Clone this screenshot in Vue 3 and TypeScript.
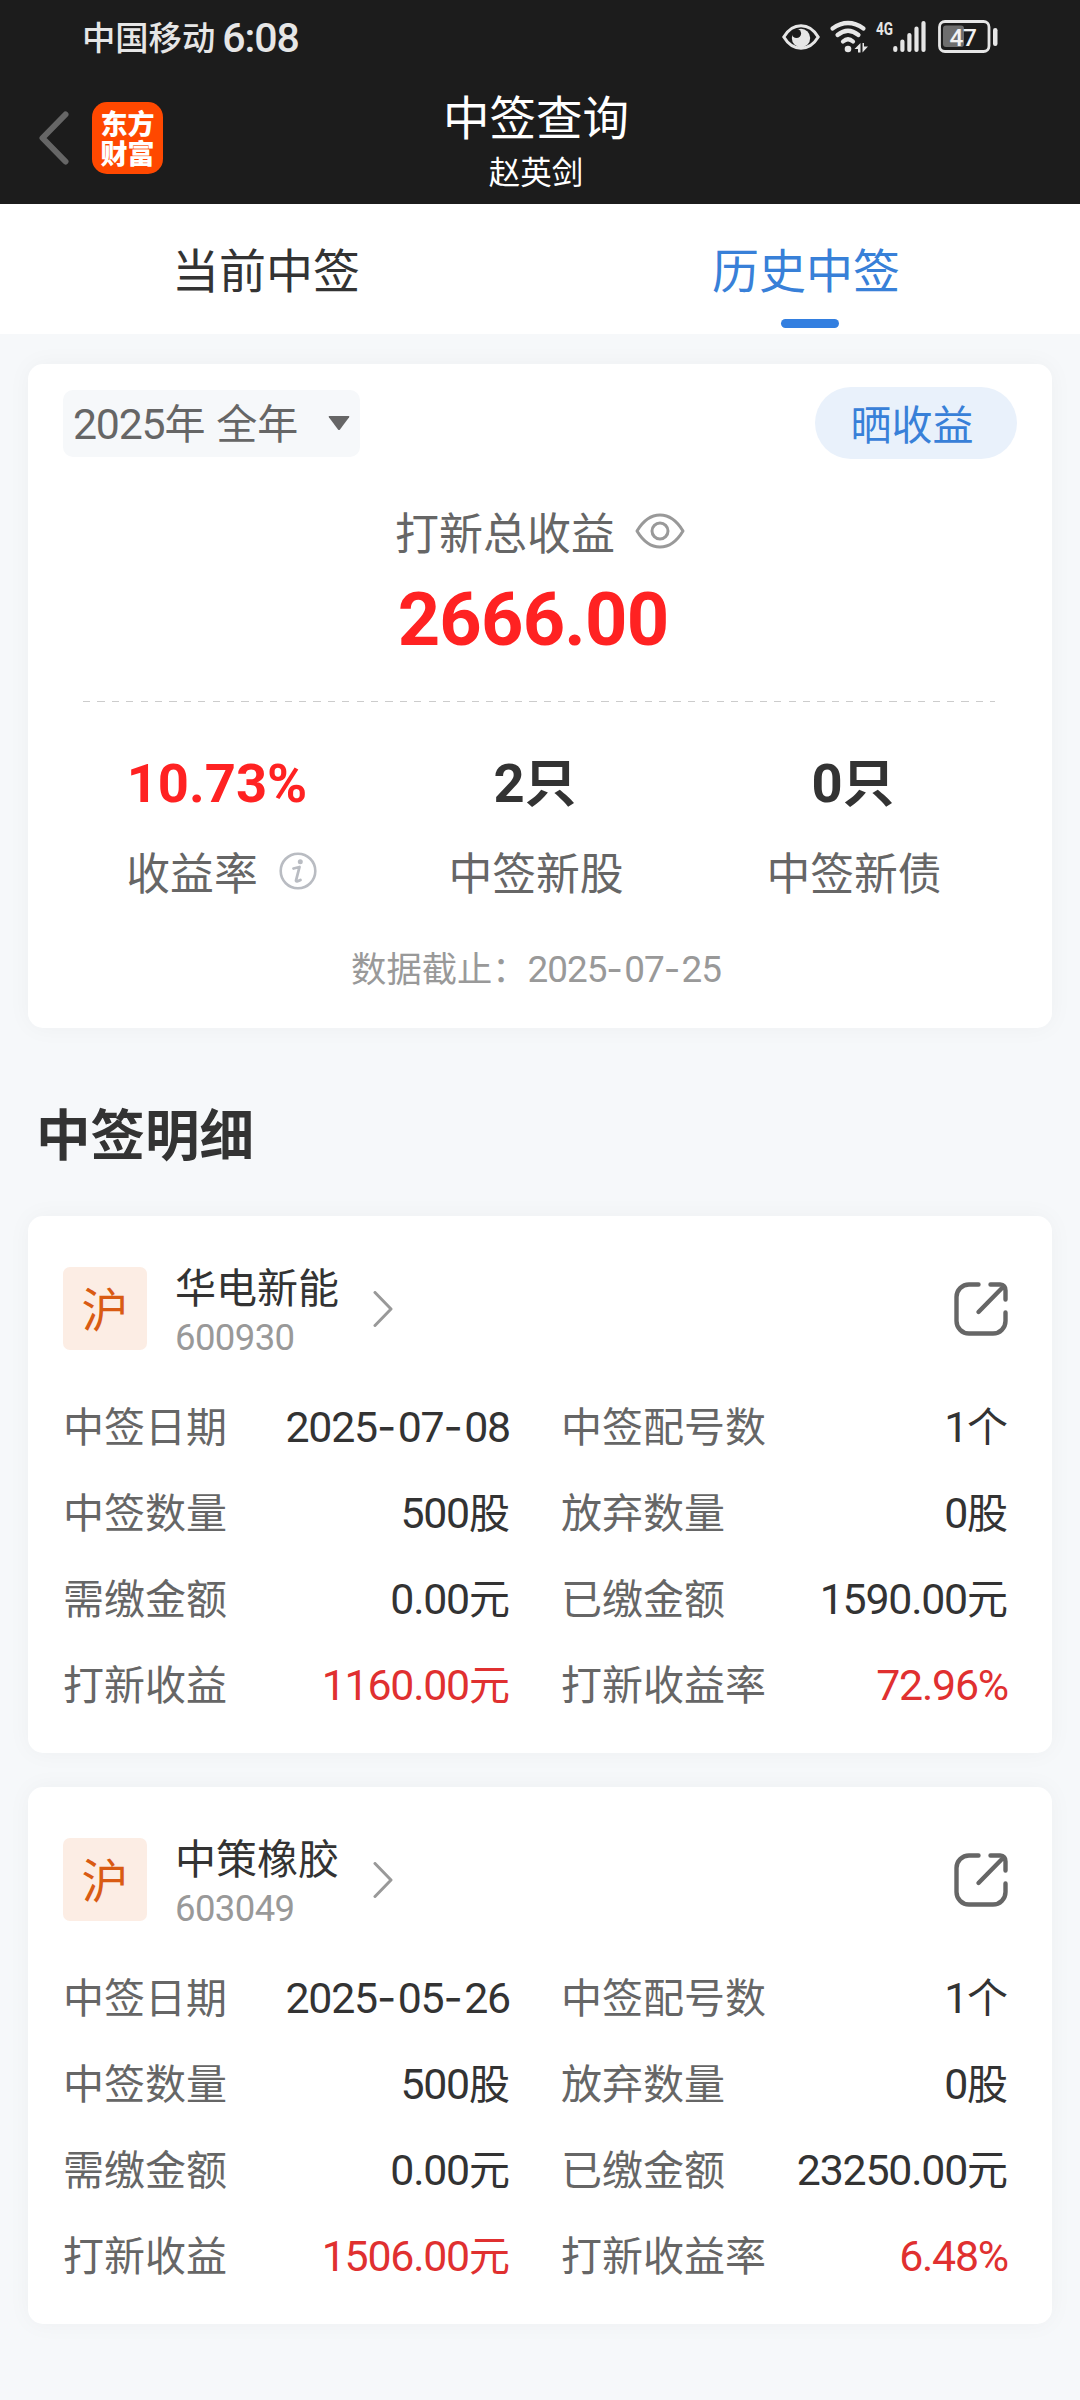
<script setup lang="ts">
import { h } from 'vue'
import type { FunctionalComponent } from 'vue'

interface Field {
  label: string
  value: string
  unit?: string
  up?: boolean
}

interface Lot {
  market: string
  name: string
  code: string
  fields: Field[]
}

const lots: Lot[] = [
  {
    market: '沪',
    name: '华电新能',
    code: '600930',
    fields: [
      { label: '中签日期', value: '2025-07-08' },
      { label: '中签配号数', value: '1', unit: '个' },
      { label: '中签数量', value: '500', unit: '股' },
      { label: '放弃数量', value: '0', unit: '股' },
      { label: '需缴金额', value: '0.00', unit: '元' },
      { label: '已缴金额', value: '1590.00', unit: '元' },
      { label: '打新收益', value: '1160.00', unit: '元', up: true },
      { label: '打新收益率', value: '72.96%', up: true },
    ],
  },
  {
    market: '沪',
    name: '中策橡胶',
    code: '603049',
    fields: [
      { label: '中签日期', value: '2025-05-26' },
      { label: '中签配号数', value: '1', unit: '个' },
      { label: '中签数量', value: '500', unit: '股' },
      { label: '放弃数量', value: '0', unit: '股' },
      { label: '需缴金额', value: '0.00', unit: '元' },
      { label: '已缴金额', value: '23250.00', unit: '元' },
      { label: '打新收益', value: '1506.00', unit: '元', up: true },
      { label: '打新收益率', value: '6.48%', up: true },
    ],
  },
]

// Latin digits are set slightly larger than the surrounding Chinese text,
// with a wider dash between the parts of a date.
const Num: FunctionalComponent<{ text: string }> = (props) =>
  h(
    'span',
    { class: 'num' },
    props.text
      .split(/(-)/)
      .map((part) => (part === '-' ? h('span', { class: 'dash' }, '-') : part)),
  )
Num.props = ['text']
</script>

<template>
  <div class="page">
    <header class="top">
      <div class="status">
        <span class="carrier">中国移动</span>
        <span class="clock">6:08</span>
        <div class="status-icons">
          <svg width="38" height="32" viewBox="0 0 38 32">
            <path d="M1.8 16C6 9 12 4.800 19 4.800S32 9 36.200 16C32 23 26 27.200 19 27.200S6 23 1.800 16Z" fill="none" stroke="#e6e6e6" stroke-width="3" />
            <circle cx="19" cy="17" r="9.200" fill="#e6e6e6" />
            <circle cx="14.500" cy="12.500" r="4.600" fill="#1c1c1c" />
          </svg>
          <svg class="wifi" width="38" height="34" viewBox="0 0 38 34">
            <g fill="none" stroke="#e6e6e6" stroke-width="4.200" stroke-linecap="round">
              <path d="M2.500 8.500Q18 -2.500 33.500 8.500" />
              <path d="M7.500 15Q18 6.500 28.500 15" />
              <path d="M13 21.500Q18 17 23 21.500" />
            </g>
            <circle cx="18" cy="29" r="3.300" fill="#e6e6e6" />
            <path d="M30.500 23v9.500H28V29h-3.500zM32.500 32.500V23H34v3.500h4z" fill="#e6e6e6" />
          </svg>
          <svg class="signal" width="50" height="34" viewBox="0 0 50 34">
            <text x="0" y="15" font-family="Roboto" font-weight="700" font-size="19" textLength="17" lengthAdjust="spacingAndGlyphs" fill="#e6e6e6">4G</text>
            <g stroke="#e6e6e6" stroke-width="4.200" stroke-linecap="round">
              <path d="M19.300 28v2M26.400 21.500v8.500M33.400 15v15M40.500 8.500v21.500M47.500 3v27" />
            </g>
          </svg>
          <svg class="battery" width="60" height="33" viewBox="0 0 60 33">
            <rect x="1.500" y="1.500" width="49.500" height="30" rx="5.500" fill="none" stroke="#e6e6e6" stroke-width="2.800" />
            <rect x="5" y="5.500" width="21" height="21.500" rx="3" fill="#6e6e6e" />
            <rect x="55" y="8" width="4.500" height="18" rx="2.200" fill="#e6e6e6" />
            <text x="25" y="25.500" text-anchor="middle" font-family="Roboto" font-weight="500" font-size="24.500" letter-spacing="-0.500" fill="#f2f2f2">47</text>
          </svg>
        </div>
      </div>
      <div class="nav">
        <div class="nav-left">
          <svg width="30" height="54" viewBox="0 0 30 54">
            <path d="M26.500 3.500 3.500 27 26.500 50.500" fill="none" stroke="#666" stroke-width="6" stroke-linecap="round" stroke-linejoin="round" />
          </svg>
          <div class="logo"><span>东方</span><span>财富</span></div>
        </div>
        <div class="nav-title">
          <h1>中签查询</h1>
          <p>赵英剑</p>
        </div>
        <div class="nav-right"></div>
      </div>
    </header>

    <nav class="tabs">
      <div class="tab"><span>当前中签</span></div>
      <div class="tab active"><span>历史中签</span><i></i></div>
    </nav>

    <main>
      <section class="card summary">
        <div class="filter">
          <div class="period">
            <span><Num text="2025" />年 全年</span>
            <svg width="24" height="16" viewBox="0 0 24 16"><path d="M2.500 1h19q1.500 0 .6 1.300L13 14.500q-1 1.200-2 0L1.900 2.300Q1 1 2.500 1Z" fill="#666" /></svg>
          </div>
          <button class="show-off" type="button">晒收益</button>
        </div>
        <div class="total-label">
          <span>打新总收益</span>
          <svg width="50" height="36" viewBox="0 0 50 36" fill="none" stroke="#999" stroke-width="3">
            <path d="M2 18C8 8 16 2 25 2S42 8 48 18C42 28 34 34 25 34S8 28 2 18Z" stroke-linejoin="round" />
            <circle cx="25" cy="18" r="8" />
          </svg>
        </div>
        <div class="total">2666.00</div>
        <div class="divider"></div>
        <div class="stats">
          <div class="stat">
            <div class="stat-value red"><Num text="10.73%" /></div>
            <div class="stat-label with-info">
              <span>收益率</span>
              <svg width="38" height="38" viewBox="0 0 38 38">
                <circle cx="19" cy="19" r="17.300" fill="none" stroke="#b9bcc2" stroke-width="2.600" />
                <circle cx="21.300" cy="9.800" r="2.500" fill="#b9bcc2" />
                <path d="M14.500 16.500 20.500 15 17 28.500Q16.800 30.300 21.500 28" fill="none" stroke="#b9bcc2" stroke-width="2.800" stroke-linecap="round" stroke-linejoin="round" />
              </svg>
            </div>
          </div>
          <div class="stat">
            <div class="stat-value"><Num text="2" />只</div>
            <div class="stat-label"><span>中签新股</span></div>
          </div>
          <div class="stat">
            <div class="stat-value"><Num text="0" />只</div>
            <div class="stat-label"><span>中签新债</span></div>
          </div>
        </div>
        <div class="as-of">数据截止：<Num text="2025-07-25" /></div>
      </section>

      <h2>中签明细</h2>

      <section v-for="lot in lots" :key="lot.code" class="card lot">
        <div class="lot-head">
          <div class="market">{{ lot.market }}</div>
          <div class="lot-name">
            <div class="name">{{ lot.name }}</div>
            <div class="code">{{ lot.code }}</div>
          </div>
          <svg class="chevron" width="20" height="36" viewBox="0 0 20 36">
            <path d="M2 1.500 18 18 2 34.500" fill="none" stroke="#999" stroke-width="3" stroke-linejoin="round" stroke-linecap="round" />
          </svg>
          <svg class="share" width="54" height="54" viewBox="0 0 54 54" fill="none" stroke="#666" stroke-width="4.400" stroke-linecap="round" stroke-linejoin="round">
            <path d="M24.500 2.500H15A12.500 12.500 0 0 0 2.500 15V39A12.500 12.500 0 0 0 15 51.500H39A12.500 12.500 0 0 0 51.500 39V30.500" />
            <path d="M36.500 2.500H46Q51.500 3 51.500 8.500V17.500M50 4 24.500 30" />
          </svg>
        </div>
        <div class="fields">
          <div v-for="field in lot.fields" :key="field.label" class="field">
            <span class="label">{{ field.label }}</span>
            <span class="value" :class="{ up: field.up }"><Num :text="field.value" />{{ field.unit }}</span>
          </div>
        </div>
      </section>
    </main>
  </div>
</template>

<style>
body {
  margin: 0;
  background: #f6f8fa;
}
.num {
  font-family: Roboto, sans-serif;
  font-size: 1.045em;
  letter-spacing: -0.028em;
}
.num .dash {
  font-family: Inter, sans-serif;
  font-size: 0.98em;
  letter-spacing: 0.035em;
}
</style>

<style scoped>
.page {
  width: 1080px;
  height: 2400px;
  overflow: hidden;
  background: #f6f8fa;
  font-family: 'Noto Sans CJK SC', sans-serif;
  color: #333;
  white-space: nowrap;
}
.top {
  box-sizing: border-box;
  height: 204px;
  background: #1c1c1c;
}
.status {
  display: flex;
  align-items: center;
  height: 74px;
  padding: 0 82px 0 82px;
  color: #e6e6e6;
}
.carrier {
  font-size: 33.300px;
  font-weight: 500;
  line-height: 74px;
  padding-bottom: 3px;
}
.clock {
  margin-left: 7px;
  font-family: Roboto, sans-serif;
  font-size: 41px;
  font-weight: 500;
  letter-spacing: -1px;
  line-height: 74px;
  padding-top: 1px;
}
.status-icons {
  display: flex;
  align-items: center;
  margin-left: auto;
  padding-bottom: 1px;
}
.status-icons svg {
  overflow: visible;
}
.wifi {
  margin-left: 10px;
}
.signal {
  margin-left: 8px;
}
.battery {
  margin-left: 12px;
}
.nav {
  display: flex;
  height: 130px;
}
.nav-left,
.nav-right {
  display: flex;
  align-items: center;
  width: 340px;
}
.nav-left {
  box-sizing: border-box;
  padding: 0 0 2px 39px;
}
.logo {
  display: flex;
  flex-direction: column;
  align-items: center;
  justify-content: center;
  width: 71px;
  height: 72px;
  margin-left: 23px;
  border-radius: 15px;
  background: #ff4800;
  color: #fff;
  font-size: 27px;
  font-weight: 900;
  line-height: 30px;
}
.nav-title {
  flex: 1;
  padding-right: 8px;
  text-align: center;
  color: #fff;
}
.nav-title h1 {
  margin: 11px 0 0;
  font-size: 46.500px;
  font-weight: 400;
  line-height: 60px;
}
.nav-title p {
  margin: 5px 0 0;
  font-size: 31.500px;
  line-height: 40px;
}
.tabs {
  display: flex;
  height: 130px;
  background: #fff;
}
.tab {
  display: flex;
  flex: 1;
  flex-direction: column;
  align-items: center;
  font-size: 47px;
  line-height: 66px;
}
.tab span {
  margin-top: 31px;
  padding-right: 8px;
}
.tab.active {
  color: #3880d8;
}
.tab i {
  width: 58px;
  height: 9px;
  margin-top: 18px;
  border-radius: 4.500px;
  background: #337fe0;
}
main {
  padding: 30px 28px 0;
}
.card {
  box-sizing: border-box;
  border-radius: 15px;
  background: #fff;
  box-shadow: 0 0 24px rgba(0, 0, 0, 0.04);
}
.summary {
  height: 664px;
  padding: 23px 35px 0;
}
.filter {
  display: flex;
  align-items: center;
  justify-content: space-between;
  height: 72px;
}
.period {
  display: flex;
  align-items: center;
  justify-content: space-between;
  box-sizing: border-box;
  width: 297px;
  height: 67px;
  padding: 0 9px 0 10px;
  border-radius: 10px;
  background: #f6f8fa;
  color: #666;
  font-size: 41px;
  line-height: 67px;
  word-spacing: 1.500px;
}
.show-off {
  width: 202px;
  height: 72px;
  padding: 0 8px 2px 0;
  border: 0;
  border-radius: 36px;
  background: #e9f1fb;
  color: #3880d8;
  font: 41px/70px 'Noto Sans CJK SC', sans-serif;
  text-align: center;
}
.total-label {
  display: flex;
  align-items: center;
  justify-content: center;
  gap: 20px;
  height: 66px;
  margin-top: 39px;
  color: #666;
  font-size: 44px;
  line-height: 66px;
}
.total {
  margin-top: 16px;
  padding-right: 14px;
  color: #ff2222;
  font-family: Roboto, sans-serif;
  font-size: 74px;
  font-weight: 700;
  letter-spacing: -0.800px;
  line-height: 80px;
  text-align: center;
}
.divider {
  height: 1px;
  margin: 41px 22px 0 20px;
  background: repeating-linear-gradient(90deg, #ccc 0 7.200px, transparent 7.200px 14.400px);
}
.stats {
  display: flex;
  margin: 39px 3px 0 -3px;
}
.stat {
  width: 318px;
  text-align: center;
}
.stat-value {
  height: 78px;
  padding-right: 4px;
  font-size: 52px;
  font-weight: 700;
  line-height: 78px;
}
.stat-value :deep(.num) {
  letter-spacing: 0;
}
.red {
  color: #ff2222;
}
.stat-label {
  display: flex;
  align-items: center;
  justify-content: center;
  gap: 21px;
  height: 66px;
  margin-top: 19px;
  padding-right: 2px;
  color: #666;
  font-size: 43.800px;
  line-height: 66px;
}
.with-info {
  padding: 0 0 0 5px;
}
.as-of {
  margin-top: 38px;
  padding-right: 8px;
  color: #999;
  font-size: 35.300px;
  line-height: 50px;
  text-align: center;
}
h2 {
  margin: 64px 0 44px 8px;
  font-size: 54.500px;
  font-weight: 700;
  line-height: 80px;
}
.lot {
  height: 537px;
  margin-bottom: 34px;
  padding: 0 44px 0 35px;
}
.lot-head {
  display: flex;
  align-items: center;
  box-sizing: border-box;
  height: 165px;
  padding-top: 20px;
}
.market {
  width: 84px;
  height: 83px;
  border-radius: 7px;
  background: #fcede4;
  color: #d95b13;
  font-size: 47px;
  line-height: 80px;
  text-align: center;
}
.lot-name {
  margin: 7px 0 0 28px;
}
.name {
  font-size: 41px;
  line-height: 51px;
}
.code {
  color: #999;
  font-family: Roboto, sans-serif;
  font-size: 36.500px;
  letter-spacing: -0.600px;
  line-height: 53px;
}
.chevron {
  margin-left: 34px;
}
.share {
  margin-left: auto;
}
.fields {
  display: grid;
  grid-template-columns: 1fr 1fr;
  column-gap: 51px;
}
.field {
  display: flex;
  justify-content: space-between;
  height: 86px;
  font-size: 41px;
  line-height: 86px;
}
.label {
  color: #666;
}
.value.up {
  color: #e03030;
}
</style>
